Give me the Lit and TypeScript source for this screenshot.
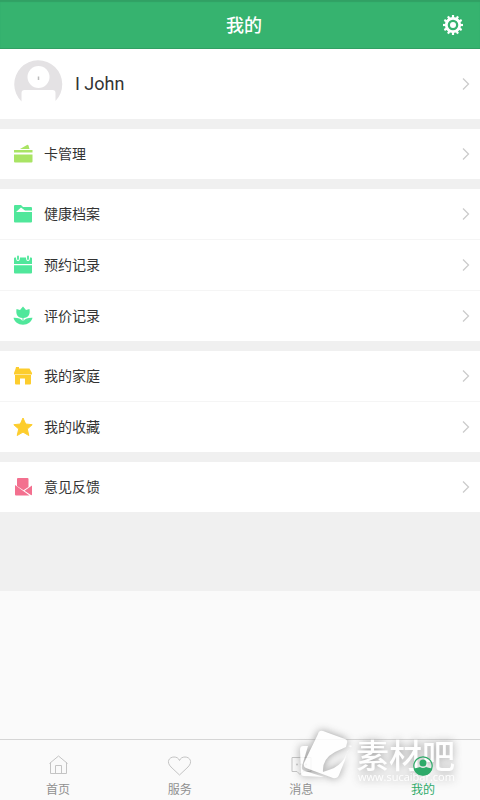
import { LitElement, html, css, svg, nothing, type SVGTemplateResult } from "lit";
import { customElement, property, state } from "lit/decorators.js";
import { classMap } from "lit/directives/class-map.js";

const icons: Record<string, SVGTemplateResult> = {
  card: svg`<path fill="#a9e464" d="M7 5 14 1q1-.5 1.500.5L16.500 5zM1 6h18.500v2.500H1zM1 10.500h18.500v7q0 1-1 1h-16.500q-1 0-1-1z"/>`,
  folder: svg`<path fill="#50e79b" d="M1 2q0-1 1-1h6l2 2h8q1 0 1 1v2.500h-7L8 3.500 3 8h16v9.500q0 1-1 1H2q-1 0-1-1z"/>`,
  calendar: svg`<path fill="#50e79b" d="M1 9V3.500q0-1 1-1h1q0 3.500 2 3.500t2-3.500h6q0 3.500 2 3.500t2-3.500h1q1 0 1 1V9zM1 10.200h18v7.300q0 1-1 1H2q-1 0-1-1z"/><path stroke="#50e79b" stroke-width="1.800" stroke-linecap="round" d="M5 1.500v2.500M15 1.500v2.500"/>`,
  flower: svg`<path fill="#50e79b" d="M3.500 3 7 4 10 .5 13 4l3.500-1c.8 5.500-1 8.500-6 9v3c1.500-2.500 5-3.500 9-3.300-1 4-4.500 7-9.500 7S1.500 15.700.5 11.700c4-.2 7.500.8 9 3.300v-3c-5-.5-6.800-3.500-6-9z"/>`,
  house: svg`<path fill="#fdcd2d" d="M3 1h3v1.500h10.500L19 7v1.500H1V7L2.500 3zM2 9h16v8.500q0 1-1 1h-5V12.500H7v6H3q-1 0-1-1z"/>`,
  star: svg`<path fill="#fdcd2d" stroke="#fdcd2d" stroke-linejoin="round" d="m10 1 2.700 6 6.500.7-4.900 4.300 1.500 6.500-5.800-3.400-5.800 3.400L5.700 12 .8 7.700l6.500-.7z"/>`,
  mail: svg`<path fill="#f3708f" d="M4 2q0-1 1-1h9.500q1 0 1 1v8L10.500 13.200 4 9zM2 8l14.500 10.500H3q-1 0-1-1zM19 8.500v9q0 .7-.7.800L11.500 13.800z"/>`,
};

@customElement("menu-row")
export class MenuRow extends LitElement {
  static styles = css`
    :host { display: block; }
    .row {
      display: flex;
      align-items: center;
      width: 100%;
      height: 50px;
      padding: 0 10px 0 13px;
      border: 0;
      background: #fff;
      color: #333;
      font: 14px/20px Roboto, "Noto Sans CJK SC", sans-serif;
      text-align: left;
      box-sizing: border-box;
      cursor: pointer;
    }
    .profile { height: 70px; font-size: 18px; line-height: 24px; }
    .icon { width: 20px; height: 20px; margin-right: 11px; }
    .avatar { width: 50px; height: 50px; margin-right: 12px; }
    .label { flex: 1; }
    .arrow { width: 8px; height: 14px; }
  `;

  @property() label = "";
  @property() icon = "";
  @property({ type: Boolean }) profile = false;

  render() {
    return html`<button class=${classMap({ row: true, profile: this.profile })} type="button">
      ${this.profile
        ? html`<svg class="avatar" viewBox="0 0 50 50" aria-hidden="true">
            <path fill="#e4e2e4" d="M8.500 42.500A24 24 0 1 1 42.500 42V34q0-3-3-3h-28q-3 0-3 3z" />
            <circle cx="25.500" cy="18" r="11" fill="#fff" />
            <path d="M25.500 17.500v3.500" stroke="#bbb" stroke-width="1.500" />
          </svg>`
        : html`<svg class="icon" viewBox="0 0 20 20" fill="none" aria-hidden="true">${icons[this.icon] ?? nothing}</svg>`}
      <span class="label">${this.label}</span>
      <svg class="arrow" viewBox="0 0 8 14" fill="none" stroke="#ccc" stroke-width="1.300" aria-hidden="true">
        <path d="m1 1.500 5.500 5.500-5.500 5.500" />
      </svg>
    </button>`;
  }
}

const groups = [
  [{ icon: "card", label: "卡管理" }],
  [
    { icon: "folder", label: "健康档案" },
    { icon: "calendar", label: "预约记录" },
    { icon: "flower", label: "评价记录" },
  ],
  [
    { icon: "house", label: "我的家庭" },
    { icon: "star", label: "我的收藏" },
  ],
  [{ icon: "mail", label: "意见反馈" }],
];

const tabs = [
  { id: "home", label: "首页", art: svg`<path d="M4.500 9.500v11h16v-11M3.500 10.500l9-7.500 9 7.500M9.500 20.500v-8h6v8"/>` },
  { id: "service", label: "服务", art: svg`<path d="M12.500 22 4 14C-1 9 2 4 7 4c2.500 0 4.500 1 5.500 3.500C13.500 5 15.500 4 18 4c5 0 8 5 3 10z"/>` },
  { id: "message", label: "消息", art: svg`<path d="M3 4.500h19v14H14l-3 3-3-3H3z"/><path stroke-width="2" stroke-linecap="round" d="M8 11.500h0M12.500 11.500h0M17 11.500h0"/>` },
  { id: "mine", label: "我的", art: svg`<circle cx="13" cy="13" r="9.200" stroke-width="1.200"/><circle cx="13" cy="10" r="3.500" fill="currentColor" stroke="none"/><path fill="currentColor" stroke="none" d="M4 15.500q4-1 6-1.500 3 2 6 0 2 .5 6 1.500-2 7-9 7t-9-7z"/>` },
];

@customElement("app-root")
export class AppRoot extends LitElement {
  static styles = css`
    :host {
      display: flex;
      flex-direction: column;
      min-height: 100vh;
      background: #fafafa;
      font-family: Roboto, "Noto Sans CJK SC", sans-serif;
    }
    .header {
      display: grid;
      grid-template-columns: 1fr auto 1fr;
      align-items: center;
      height: 49px;
      padding: 0 16px 0 24px;
      box-sizing: border-box;
      background: #36b36f;
      box-shadow: inset 0 2px 1px #31a064, inset 0 -1px #319f63;
    }
    .title {
      grid-column: 2;
      margin: 0;
      padding-top: 2px;
      color: #fff;
      font-size: 18px;
      line-height: 24px;
      font-weight: 500;
    }
    .settings {
      justify-self: end;
      width: 22px;
      height: 22px;
      padding: 0;
      border: 0;
      background: none;
      cursor: pointer;
    }
    .settings svg { display: block; }
    .content {
      display: flex;
      flex-direction: column;
      gap: 10px;
      padding-bottom: 79px;
      background: #f0f0f0;
    }
    .group {
      display: flex;
      flex-direction: column;
      gap: 1px;
      background: #f5f5f5;
    }
    .tabs {
      position: relative;
      display: flex;
      justify-content: space-between;
      height: 61px;
      margin-top: auto;
      padding: 13px 27px 0 28px;
      box-sizing: border-box;
      border-top: 1px solid #d5d5d5;
    }
    .tab {
      display: flex;
      flex-direction: column;
      align-items: center;
      gap: 4px;
      width: 60px;
      color: #909090;
      font-size: 12px;
      line-height: 18px;
      text-decoration: none;
    }
    .tab svg { width: 25px; height: 24px; color: #c4c4c4; }
    .active { position: relative; z-index: 1; }
    .active, .active svg { color: #2eaa69; }
    .watermark {
      position: absolute;
      right: 10px;
      bottom: 10px;
      width: 170px;
      height: 64px;
      opacity: 0.85;
      filter: drop-shadow(0 0 4px #888);
      pointer-events: none;
    }
    .brand { font: 500 33px "Noto Sans CJK SC", sans-serif; }
    .site { font: 500 11px "Open Sans", sans-serif; }
  `;

  @state() private current = "mine";

  render() {
    const teeth = Array.from({ length: 12 }, (_, i) => i * 30);
    return html`
      <header class="header">
        <h1 class="title">我的</h1>
        <button class="settings" type="button" aria-label="设置">
          <svg width="22" height="22" viewBox="0 0 22 22" fill="none" stroke="#fff">
            <circle cx="11" cy="11" r="6.700" stroke-width="2.800" />
            <circle cx="11" cy="11" r="3" fill="#fff" stroke="none" />
            ${teeth.map((a) => svg`<path d="M11 1v3" stroke-width="2.200" transform="rotate(${a} 11 11)"/>`)}
          </svg>
        </button>
      </header>
      <main class="content">
        <menu-row profile label="I John"></menu-row>
        ${groups.map(
          (rows) => html`<section class="group">
            ${rows.map((r) => html`<menu-row icon=${r.icon} label=${r.label}></menu-row>`)}
          </section>`
        )}
      </main>
      <nav class="tabs">
        ${tabs.map(
          (t) => html`<a
            class=${classMap({ tab: true, active: t.id === this.current })}
            href="#${t.id}"
            @click=${() => (this.current = t.id)}
          >
            <svg viewBox="0 0 25 24" fill="none" stroke="currentColor" aria-hidden="true">${t.art}</svg>
            <span>${t.label}</span>
          </a>`
        )}
        <svg class="watermark" viewBox="0 0 170 64" fill="#fff">
          <path fill-rule="evenodd" d="M18 8q1-4 5-3l22 8q3 1 2 4l-1 4-11 5q-13 7-12 20 6-2 11-4 9-5 12-13 2-5 5-8l-3-1q3-1 4 0-6 6-7 14L39 49q-2 4-6 3L6 42q-3-1-2-5z" />
          <path d="M8 20H3q-3 0-3 4l1 23q0 3 3 3l20 1L5 45q-4-1-3-5z" />
          <text class="brand" x="56" y="42">素材吧</text>
          <text class="site" x="58" y="55">www.sucaibar.com</text>
        </svg>
      </nav>
    `;
  }
}
